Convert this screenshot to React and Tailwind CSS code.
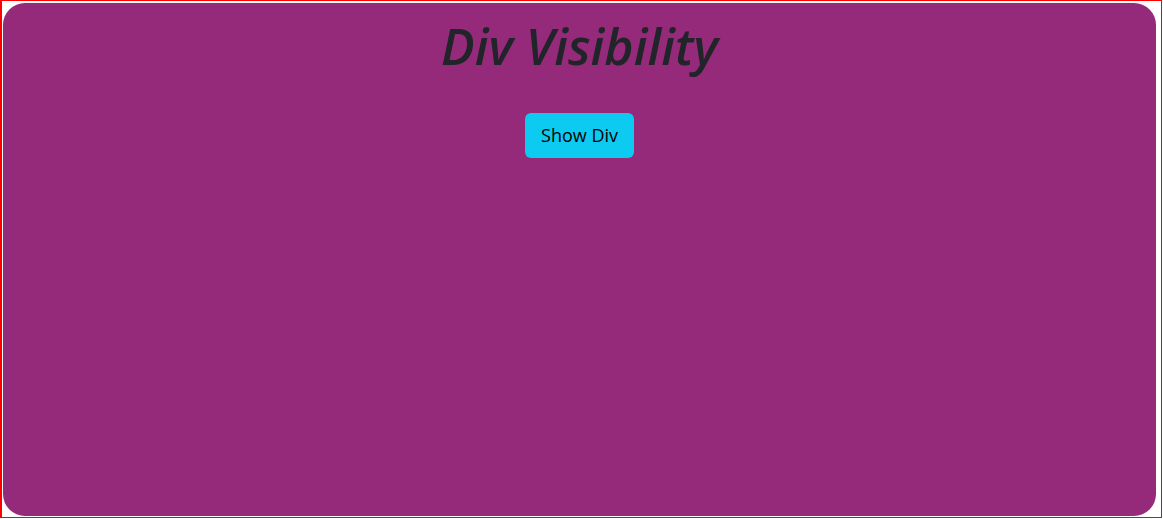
export default function App() {
  return (
    <div className="w-[1163px] h-[519px] bg-white">
      <div className="w-[1162px] h-[518px] border border-l-2 border-[#ff0000] pl-px pt-[2px] pr-[5px] pb-px">
        <div className="h-full w-full rounded-[22px] bg-[#952a7a] flex flex-col items-center" style={{ fontFamily: '"Open Sans", "Noto Sans", sans-serif' }}>
          <h1 className="mt-[11px] text-[50px] leading-[64px] font-semibold italic text-[#212529]">Div Visibility</h1>
          <button className="mt-[35px] h-[45px] px-[16px] rounded-[6px] bg-[#0dcaf0] text-[18px] text-[#000]">Show Div</button>
        </div>
      </div>
    </div>
  );
}
